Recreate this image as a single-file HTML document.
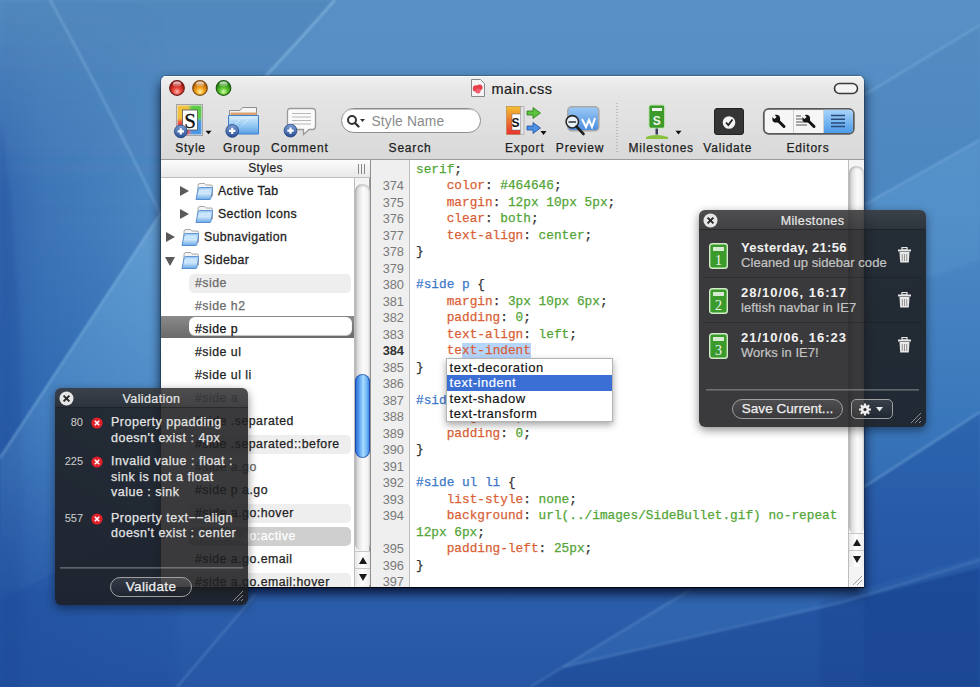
<!DOCTYPE html>
<html><head><meta charset="utf-8">
<style>
*{margin:0;padding:0;box-sizing:border-box}
html,body{width:980px;height:687px;overflow:hidden}
body{position:relative;font-family:"Liberation Sans",sans-serif;background:#3f73b1}
.a{position:absolute}
#bg{position:absolute;left:0;top:0}
/* window */
#win{position:absolute;z-index:1;left:161px;top:76px;width:703px;height:511px;border-radius:5px 5px 0 0;overflow:hidden;
 box-shadow:0 1px 0 rgba(0,0,10,.85),0 6px 12px rgba(0,5,25,.85),0 0 0 1px rgba(0,0,0,.2)}
#tb{position:absolute;left:0;top:0;width:703px;height:84px;background:linear-gradient(#f0f0f0,#e6e6e6 20%,#d9d9d9);border-bottom:1px solid #9c9c9c;box-shadow:inset 0 1px 0 #fff}
.lbl{position:absolute;width:100px;text-align:center;font-size:12px;letter-spacing:.8px;color:#1e1e1e;white-space:nowrap;top:64.5px;-webkit-text-stroke:.25px #1e1e1e}
#title{position:absolute;left:311px;width:100px;text-align:center;top:4.5px;font-size:14.5px;letter-spacing:.45px;color:#1a1a1a;-webkit-text-stroke:.2px #1a1a1a;white-space:nowrap}
.tl{position:absolute;top:5px;width:15px;height:15px;border-radius:50%}
#list{position:absolute;left:0;top:84px;width:209px;height:427px;background:#fff}
#hdr{position:absolute;left:0;top:0;width:209px;height:18px;background:linear-gradient(#fbfbfb,#e9e9e9);border-bottom:1px solid #bdbdbd;font-size:12px;letter-spacing:.3px;-webkit-text-stroke:.2px #222;color:#222;text-align:center;line-height:17px}

.row{position:absolute;left:0;width:193px;height:23px;font-size:12px;color:#222;white-space:nowrap;line-height:23px}
.row .ft{position:absolute;top:1px;-webkit-text-stroke:.3px #1e1e1e;font-size:12.3px;letter-spacing:.4px;color:#1e1e1e}
.row .st{position:absolute;left:34px;top:1px;-webkit-text-stroke:.25px currentColor;font-size:12.3px;letter-spacing:.5px}
.row.g .st{color:#6a6a6a}
.row.hl:before{content:"";position:absolute;left:28px;top:-5px;width:162px;height:19px;border-radius:5px;background:#eeeeee;top:2.5px}
.row .st{z-index:1}
.row.act:before{content:"";position:absolute;left:28px;top:2.5px;width:162px;height:19px;border-radius:5px;background:#cfcfcf}
.row.act .st{color:#fff}
.selband{position:absolute;left:0;width:193px;height:22px;background:linear-gradient(#8a8a8a,#6a6a6a);}
.selband:after{content:"";position:absolute;left:28px;top:1.5px;width:163px;height:19px;border-radius:6px;background:#fff;box-shadow:inset 0 -1px 1px rgba(0,0,0,.25)}
.row.selr .st{color:#111}
.tri{position:absolute;top:7px;width:0;height:0;border-left:9px solid #5a5a5a;border-top:5px solid transparent;border-bottom:5px solid transparent}
.trd{position:absolute;top:9px;width:0;height:0;border-top:9px solid #5a5a5a;border-left:5.5px solid transparent;border-right:5.5px solid transparent}
.fd{position:absolute;top:3px}
.grip{position:absolute;left:197px;top:4px;width:7px;height:10px;border-left:1px solid #888;border-right:1px solid #888}
.grip:after{content:"";position:absolute;left:2px;top:0;width:1px;height:10px;background:#888}

#gut{position:absolute;left:209px;top:84px;width:40px;height:427px;background:#efefef;border-left:1px solid #8f8f8f;border-right:1px solid #bdbdbd}
#code{position:absolute;left:249px;top:84px;width:438px;height:427px;background:#fff}
.ln{position:absolute;left:0;width:33px;line-height:16.5px;text-align:right;font-family:"Liberation Sans",sans-serif;font-size:12.8px;color:#7a7a7a}
.cl{position:absolute;left:6px;-webkit-text-stroke:.25px currentColor;line-height:16.5px;font-family:"Liberation Mono",monospace;font-size:12.78px;color:#333;white-space:pre}
.sel{background:#b6d5fb}.p{color:#d95f36}.v{color:#52a536}.s{color:#3d78c8}
#sb1{position:absolute;left:193px;top:18px;width:16px;height:409px;background:#f4f4f4;border-left:1px solid #bdbdbd;border-right:1px solid #9c9c9c}
#sb2{position:absolute;left:687px;top:84px;width:16px;height:427px;background:#f4f4f4;border-left:1px solid #bdbdbd}
.trk{position:absolute;left:0;width:15px;border-radius:7px;background:linear-gradient(90deg,#bcbcbc,#e4e4e4 25%,#fbfbfb 55%,#f2f2f2 85%,#dadada);box-shadow:inset 0 2px 2px rgba(0,0,0,.18)}
.thumb{position:absolute;left:0;width:15px;border-radius:7.5px;background:linear-gradient(90deg,#1f5fcf,#5ea4f2 30%,#a8dcfc 55%,#6ab4f6 80%,#2a6ed8);box-shadow:inset 0 0 0 1px rgba(20,50,140,.55)}
.arr{position:absolute;left:0;width:15px;height:17px;background:linear-gradient(90deg,#e8e8e8,#fff 50%,#ececec);border-top:1px solid #c8c8c8}
.au{position:absolute;left:3.5px;top:5px;border-bottom:7px solid #1a1a1a;border-left:4px solid transparent;border-right:4px solid transparent}
.ad{position:absolute;left:3.5px;top:5px;border-top:7px solid #1a1a1a;border-left:4px solid transparent;border-right:4px solid transparent}
.pop{position:absolute;left:446px;top:357.5px;width:166.5px;height:64px;background:#fff;border:1px solid #b4b4b4;box-shadow:0 3px 7px rgba(0,0,0,.35);z-index:2}
.pi{position:absolute;left:0;width:164.5px;-webkit-text-stroke:.15px currentColor;height:15.5px;font-size:13px;letter-spacing:.55px;line-height:15.5px;color:#111;padding-left:2.5px;white-space:nowrap}
.pi.on{background:#3b6fd6;color:#fff}
.hud{position:absolute;z-index:3;border-radius:6px;background:rgba(30,30,32,.875);box-shadow:0 3px 10px rgba(0,0,0,.45);overflow:hidden}
.hudt{position:absolute;left:0;top:0;width:100%;height:20px;padding-top:1px;background:linear-gradient(rgba(255,255,255,.10),rgba(255,255,255,.04));border-bottom:1px solid rgba(0,0,0,.45);color:#e8e8e8;font-size:12.5px;letter-spacing:.4px;-webkit-text-stroke:.2px #e8e8e8;text-align:center;line-height:20px}
.hx{position:absolute;left:6px;top:3px;width:14px;height:14px;border-radius:50%;background:#e8e8e8}
.ht{position:absolute;color:#e6e6e6;font-size:12px;white-space:nowrap}
.mt{position:absolute;color:#f2f2f2;font-size:13px;font-weight:bold;letter-spacing:.3px;white-space:nowrap;line-height:16px}
.md{position:absolute;-webkit-text-stroke:.2px #c4c4c4;color:#c4c4c4;font-size:13px;letter-spacing:.05px;white-space:nowrap;line-height:16px}
.vn{position:absolute;width:28px;text-align:right;color:#cfcfcf;font-size:11px;white-space:nowrap;line-height:15px}
.vt{position:absolute;-webkit-text-stroke:.25px #e4e4e4;color:#e4e4e4;font-size:12.5px;letter-spacing:.5px;white-space:nowrap;line-height:15px}
.hsep{position:absolute;height:2px;background:rgba(255,255,255,.28);border-bottom:1px solid rgba(0,0,0,.2)}
.hb{position:absolute;-webkit-text-stroke:.25px #eee;color:#eee;font-size:13.5px;letter-spacing:.35px;border:1.5px solid #a0a0a0;border-radius:10px;text-align:center;background:linear-gradient(rgba(255,255,255,.10),rgba(255,255,255,0))}
</style></head><body>
<svg id="bg" width="980" height="687" viewBox="0 0 980 687">
 <defs>
  <linearGradient id="g0" x1="0" y1="0" x2="0" y2="687" gradientUnits="userSpaceOnUse">
   <stop offset="0" stop-color="#5891c5"/><stop offset="0.3" stop-color="#4f8ac4"/><stop offset="0.6" stop-color="#3a78bc"/><stop offset="0.8" stop-color="#2d62ae"/><stop offset="1" stop-color="#2656a4"/>
  </linearGradient>
  <linearGradient id="gl" x1="0" y1="0" x2="170" y2="0" gradientUnits="userSpaceOnUse">
   <stop offset="0" stop-color="#1f4e9e" stop-opacity=".6"/><stop offset="0.25" stop-color="#1f4e9e" stop-opacity=".35"/><stop offset="1" stop-color="#1f4e9e" stop-opacity="0"/>
  </linearGradient>
  <linearGradient id="gtop" x1="0" y1="0" x2="0" y2="1">
   <stop offset="0" stop-color="#000" stop-opacity="0"/><stop offset=".3" stop-color="#000" stop-opacity="1"/><stop offset="1" stop-color="#000" stop-opacity="1"/>
  </linearGradient>
  <mask id="mtop"><rect width="980" height="687" fill="#fff"/><rect width="980" height="200" fill="url(#gmask)"/></mask>
  <linearGradient id="gmask" x1="0" y1="0" x2="0" y2="1"><stop offset="0" stop-color="#000"/><stop offset="1" stop-color="#fff"/></linearGradient>
  <filter id="b2" x="-20%" y="-20%" width="140%" height="140%"><feGaussianBlur stdDeviation="2"/></filter>
  <filter id="b1" x="-20%" y="-20%" width="140%" height="140%"><feGaussianBlur stdDeviation="1"/></filter>
 </defs>
 <rect width="980" height="687" fill="url(#g0)"/>
 <!-- top left slightly darker than top right -->
 <linearGradient id="tlg" x1="0" y1="0" x2="0" y2="220" gradientUnits="userSpaceOnUse"><stop offset="0" stop-color="#3a6aa0" stop-opacity=".22"/><stop offset="1" stop-color="#3a6aa0" stop-opacity="0"/></linearGradient>
 <path d="M0 0H335L265 77L161 215L0 220Z" fill="url(#tlg)" filter="url(#b2)"/>
 <!-- left dark band -->
 <g mask="url(#mtop)"><rect width="200" height="687" fill="url(#gl)"/></g>
 <path d="M0 120 Q30 300 20 687 L0 687Z" fill="#1a4896" opacity=".25" filter="url(#b2)"/>
 <!-- left wedge lighter -->
 <linearGradient id="wg" x1="161" y1="230" x2="20" y2="580" gradientUnits="userSpaceOnUse"><stop offset="0" stop-color="#7ab8e4" stop-opacity=".45"/><stop offset=".45" stop-color="#7ab8e4" stop-opacity=".32"/><stop offset="1" stop-color="#7ab8e4" stop-opacity=".05"/></linearGradient>
 <path d="M161 213 L38 400 L0 458 L0 600 L161 520Z" fill="url(#wg)" filter="url(#b1)"/>
 
 <!-- right side: lighter top ribbon -->
 <path d="M980 25 L864 96 L864 205 L980 140Z" fill="#3a70aa" opacity=".12" filter="url(#b2)"/>
 <path d="M980 140 L864 205 L864 300 L980 260Z" fill="#6aaee0" opacity=".18" filter="url(#b2)"/>
 <!-- right lower darker -->
 <path d="M980 412 L864 487 L864 687 L980 687Z" fill="#1c4c9c" opacity=".4" filter="url(#b1)"/>
 <path d="M980 568 L840 603 L563 667 L530 687 L980 687Z" fill="#163f8c" opacity=".3" filter="url(#b1)"/>
 <path d="M820 600 L820 687 L980 687 L980 560Z" fill="#123a86" opacity=".22" filter="url(#b2)"/>
 <!-- bottom middle lighter band -->
 <path d="M563 667 L690 588 L864 588 L980 556 L980 568 L840 603Z" fill="#5a9ad8" opacity=".14" filter="url(#b1)"/>
 <!-- bottom left darker -->
 <path d="M0 590 L180 590 L177 687 L0 687Z" fill="#1a4898" opacity=".18" filter="url(#b2)"/>
 <!-- streak lines -->
 <g stroke="#a8d4f6" fill="none" filter="url(#b1)">
  <path d="M50 0 Q100 90 161 215" stroke-opacity=".35" stroke-width="1.8"/>
  <path d="M161 213 L38 400 L0 458" stroke-opacity=".45" stroke-width="1.8"/>
  <path d="M335 0 Q300 40 265 77" stroke-opacity=".5" stroke-width="2"/>
  <path d="M980 25 L864 95" stroke-opacity=".3" stroke-width="1.8"/>
  <path d="M980 140 L864 205" stroke-opacity=".3" stroke-width="1.8"/>
  <path d="M980 412 L864 487" stroke-opacity=".4" stroke-width="1.8"/>
  <path d="M980 560 L840 603 L563 667" stroke-opacity=".22" stroke-width="1.8"/>
  <path d="M690 590 L530 687" stroke-opacity=".22" stroke-width="1.8"/>
  <path d="M255 595 L177 687" stroke-opacity=".25" stroke-width="1.8"/>
 </g>
</svg>

<div id="win">
 <div id="tb">
  <svg class="a" style="left:0;top:0" width="80" height="26" viewBox="0 0 80 26">
   <defs>
    <radialGradient id="tr" cx=".5" cy=".75" r=".6"><stop offset="0" stop-color="#ffb8b0"/><stop offset=".45" stop-color="#e8443a"/><stop offset="1" stop-color="#a8140e"/></radialGradient>
    <radialGradient id="ty" cx=".5" cy=".75" r=".6"><stop offset="0" stop-color="#fff4a8"/><stop offset=".45" stop-color="#f4a620"/><stop offset="1" stop-color="#b86008"/></radialGradient>
    <radialGradient id="tg" cx=".5" cy=".75" r=".6"><stop offset="0" stop-color="#d8ffa8"/><stop offset=".45" stop-color="#5cc432"/><stop offset="1" stop-color="#22800e"/></radialGradient>
    <linearGradient id="gloss" x1="0" y1="0" x2="0" y2="1"><stop offset="0" stop-color="#fff" stop-opacity=".85"/><stop offset="1" stop-color="#fff" stop-opacity="0"/></linearGradient>
   </defs>
   <g transform="translate(16,12)"><circle r="7.3" fill="url(#tr)" stroke="#6a1a16" stroke-width="1.2"/><ellipse cy="-3.6" rx="4.2" ry="2.8" fill="url(#gloss)"/></g>
   <g transform="translate(39,12)"><circle r="7.3" fill="url(#ty)" stroke="#7a4a10" stroke-width="1.2"/><ellipse cy="-3.6" rx="4.2" ry="2.8" fill="url(#gloss)"/></g>
   <g transform="translate(62.5,12)"><circle r="7.3" fill="url(#tg)" stroke="#1e5a14" stroke-width="1.2"/><ellipse cy="-3.6" rx="4.2" ry="2.8" fill="url(#gloss)"/></g>
  </svg>
  <div id="title">main.css</div>
  <svg class="a" style="left:0;top:0" width="703" height="84" viewBox="0 0 703 84">
   <defs>
    <linearGradient id="bb" x1="0" y1="0" x2="0" y2="1"><stop offset="0" stop-color="#7b9fd6"/><stop offset="1" stop-color="#2a4e94"/></linearGradient>
    <linearGradient id="fb" x1="0" y1="0" x2="0" y2="1"><stop offset="0" stop-color="#d4ecfc"/><stop offset="0.6" stop-color="#8cc4f2"/><stop offset="1" stop-color="#5a9ee6"/></linearGradient>
    <linearGradient id="pv" x1="0" y1="0" x2="0" y2="1"><stop offset="0" stop-color="#9ccaf6"/><stop offset="1" stop-color="#4a8ee0"/></linearGradient>
    <linearGradient id="sel" x1="0" y1="0" x2="0" y2="1"><stop offset="0" stop-color="#a8d4fa"/><stop offset="1" stop-color="#4a9ae8"/></linearGradient>
    <linearGradient id="exf" x1="0" y1="0" x2="0" y2="1"><stop offset="0" stop-color="#f4c030"/><stop offset="1" stop-color="#e83030"/></linearGradient>
    <filter id="sb" x="-10%" y="-10%" width="120%" height="120%"><feGaussianBlur stdDeviation="1.6"/></filter>
    <g id="badge"><circle r="6.4" fill="url(#bb)" stroke="#24447e" stroke-width=".8"/><path d="M-3.2 0H3.2M0 -3.2V3.2" stroke="#fff" stroke-width="2.2"/></g>
   </defs>
   <!-- doc icon -->
   <g transform="translate(310,3)">
    <path d="M0.5 .5H9.5L13.5 4.5V17.5H.5Z" fill="#f4f4f4" stroke="#8a8a8a"/>
    <circle cx="5" cy="9.5" r="3.2" fill="#e8404a"/><circle cx="8.5" cy="8.5" r="3" fill="#e8404a"/><circle cx="7" cy="12" r="2.5" fill="#f06070"/>
   </g>
   <!-- zoom pill -->
   <rect x="673.5" y="7.5" width="23" height="10" rx="5" fill="#f4f4f4" stroke="#3a3a3a" stroke-width="1.6"/>
   <!-- Style icon -->
   <g transform="translate(15,28)">
    <rect x="0.5" y="0.5" width="26" height="31" fill="#e6e6e6" stroke="#a4a4a4"/>
    <clipPath id="ring"><rect x="1.5" y="1.5" width="24" height="29"/></clipPath>
    <g clip-path="url(#ring)"><g filter="url(#sb)">
     <path d="M0 0H13.5V16H0Z" fill="#f2c23a"/><path d="M13.5 0H27V16H13.5Z" fill="#5ccc44"/>
     <path d="M13.5 16H27V32H13.5Z" fill="#4a96e6"/><path d="M0 16H13.5V32H0Z" fill="#e84a3e"/>
    </g></g>
    <rect x="6.5" y="6" width="15" height="20" fill="#fff" stroke="#555" stroke-width=".8"/>
    <text x="14" y="23.8" font-family="Liberation Serif" font-size="21" text-anchor="middle" fill="#111" stroke="#111" stroke-width=".3">S</text>
    <use href="#badge" x="4.8" y="27.4"/>
    <path d="M29.5 26.8H35.6L32.55 30.3Z" fill="#111"/>
   </g>
   <!-- Group icon -->
   <g transform="translate(67,31)">
    <path d="M1.5 3.5H12L14.5 .5H28.5V18H1.5Z" fill="#f6f6f6" stroke="#8e8e8e"/>
    <rect x="2.5" y="5.5" width="26" height="3" fill="#d9a070"/>
    <path d="M.5 8.5H30.5V27H.5Z" fill="url(#fb)" stroke="#3f7fcc"/>
    <path d="M3 12L26 11M6 18L12 13M14 18L20 13" stroke="#e8f6ff" stroke-width="1" opacity=".6"/>
    <use href="#badge" x="4.2" y="23.9"/>
   </g>
   <!-- Comment icon -->
   <g transform="translate(126,32)">
    <path d="M3.5 .5H25.5Q28.5 .5 28.5 3.5V18.5Q28.5 21.5 25.5 21.5H22L16.5 26.5V21.5H3.5Q.5 21.5 .5 18.5V3.5Q.5 .5 3.5 .5Z" fill="#fbfbfb" stroke="#9a9a9a" stroke-width="1.3"/>
    <path d="M5 5.5H24M5 9H24M5 12.5H24M5 16H24" stroke="#b8b8b8" stroke-width="1"/>
    <use href="#badge" x="3.5" y="22.6"/>
   </g>
   <!-- Search field -->
   <rect x="180.5" y="32.5" width="139" height="24" rx="12" fill="#fff" stroke="#8c8c8c"/>
   <path d="M181.5 42Q181.5 33.5 192 33.5H308Q318.5 33.5 318.5 42" fill="none" stroke="#c4c4c4" stroke-width="1"/>
   <circle cx="191" cy="44" r="4" fill="none" stroke="#333" stroke-width="2"/>
   <path d="M194 47L197.5 50.5" stroke="#333" stroke-width="2.4" stroke-linecap="round"/>
   <path d="M199 43H204L201.5 46Z" fill="#333"/>
   <text x="210.5" y="49.5" font-family="Liberation Sans" font-size="13.8" letter-spacing=".15" fill="#8a8a8a">Style Name</text>
   <!-- Export icon -->
   <g transform="translate(345,30)">
    <rect x=".5" y=".5" width="14" height="28" fill="url(#exf)" stroke="#b08040" stroke-width=".6"/>
    <rect x="6" y="8" width="9" height="16" fill="#fff" stroke="#666" stroke-width=".5"/>
    <text x="9.5" y="21" font-family="Liberation Sans" font-weight="bold" font-size="12" text-anchor="middle" fill="#111">S</text>
    <rect x="14.5" y=".5" width="3.5" height="28" fill="#e4e4e4" stroke="#9a9a9a" stroke-width=".6"/>
    <path d="M21 5H27V1.5L34.5 7L27 12.5V9H21Z" fill="#5cc43c" stroke="#2e7a1a" stroke-width=".8"/>
    <path d="M21 20H27V16.5L34.5 22L27 27.5V24H21Z" fill="#4a90e6" stroke="#1f4ea0" stroke-width=".8"/>
    <path d="M34.5 25H40.5L37.5 29Z" fill="#111"/>
   </g>
   <!-- Preview icon -->
   <g transform="translate(406,30)">
    <rect x=".8" y=".8" width="31" height="24" rx="4" fill="url(#pv)" stroke="#a8a8a8" stroke-width="1.6"/>
    <path d="M15 13L19 21L22 14L25 21L28 12" fill="none" stroke="#fff" stroke-width="2"/>
    <circle cx="5.3" cy="15.8" r="6.2" fill="#e8f2fb" stroke="#2a2a2a" stroke-width="1.6"/>
    <path d="M1.5 16H9" stroke="#333" stroke-width="1.4"/>
    <path d="M9.5 20.5L16.5 28" stroke="#222" stroke-width="2.6" stroke-linecap="round"/>
   </g>
   <!-- separator -->
   <path d="M456 27V77" stroke="#9a9a9a" stroke-width="1" stroke-dasharray="1 2"/>
   <!-- Milestones icon -->
   <g transform="translate(487,28)">
    <rect x=".8" y=".8" width="16" height="23.5" rx="2" fill="#3c9a2a" stroke="#cfe8c4" stroke-width="1.2"/>
    <rect x="4" y="4" width="10" height="3" fill="#f2f2f2"/>
    <text x="8.8" y="21" font-family="Liberation Sans" font-weight="bold" font-size="12" text-anchor="middle" fill="#f4f4f4">S</text>
    <rect x="7.5" y="24.5" width="2.5" height="6" fill="#3a3a5a"/>
    <path d="M-2 33Q8 29 20 33L20 35H-2Z" fill="#86c23c"/>
    <path d="M27.5 26.8H33.5L30.5 30.5Z" fill="#111"/>
   </g>
   <!-- Validate icon -->
   <rect x="553.5" y="32.5" width="29" height="26" rx="2.5" fill="#353535" stroke="#222"/>
   <circle cx="568" cy="46.5" r="6.3" fill="#f4f4f4"/>
   <path d="M565 46.5L567.3 49L571.5 43.5" fill="none" stroke="#222" stroke-width="1.8"/>
   <!-- Editors segmented -->
   <rect x="602.8" y="32.8" width="90" height="25" rx="5" fill="#f6f6f6" stroke="#5a5a5a" stroke-width="1.8"/>
   <path d="M662.5 33.7H688Q691.9 33.7 691.9 37.7V53Q691.9 57 688 57H662.5Z" fill="url(#sel)"/>
   <path d="M632.5 34V57M662.5 34V57" stroke="#cfcfcf" stroke-width="1"/>
   <g id="wr1" transform="translate(611,38.5)">
    <path d="M5.2 5.2L12 12" stroke="#141414" stroke-width="3" stroke-linecap="round"/>
    <circle cx="4.2" cy="4.2" r="3.9" fill="#141414"/>
    <path d="M0 2.2L2.2 0L4.6 2.4L2.4 4.6Z" fill="#f6f6f6"/>
   </g>
   <g transform="translate(641,38.5)">
    <path d="M5.2 5.2L12 12" stroke="#141414" stroke-width="3" stroke-linecap="round"/>
    <circle cx="4.2" cy="4.2" r="3.9" fill="#141414"/>
    <path d="M0 2.2L2.2 0L4.6 2.4L2.4 4.6Z" fill="#f4f4f4"/>
   </g>
   <path d="M635 40H640M635 43H641M635 46H643M635 49H646" stroke="#555" stroke-width="1"/>
   <path d="M670 39.5H684M670 43.2H684M670 46.9H684M670 50.6H684" stroke="#2a4a78" stroke-width="1.5"/>
  </svg>
  <div class="lbl" style="left:-20.5px">Style</div>
  <div class="lbl" style="left:30.75px">Group</div>
  <div class="lbl" style="left:88.85px">Comment</div>
  <div class="lbl" style="left:199px">Search</div>
  <div class="lbl" style="left:313.8px">Export</div>
  <div class="lbl" style="left:369px">Preview</div>
  <div class="lbl" style="left:450.25px">Milestones</div>
  <div class="lbl" style="left:516.75px">Validate</div>
  <div class="lbl" style="left:597px">Editors</div>
 </div>
 <div id="list">
  <div id="hdr">Styles<span class="grip"></span></div>
<svg width="0" height="0" style="position:absolute"><defs><linearGradient id="fg" x1="0" y1="0" x2="0" y2="1"><stop offset="0" stop-color="#a8d2f8"/><stop offset=".5" stop-color="#cfe8fc"/><stop offset="1" stop-color="#6aa8e8"/></linearGradient></defs></svg>
<div class="row " style="top:19.3px"><i class="tri" style="left:19px"></i><svg class="fd" style="left:34px" width="18" height="18" viewBox="0 0 18 18"><path d="M3 3.5Q3 1.5 5 1.5H9Q10 1.5 10.5 2.5L11 3H16Q17.5 3 17.5 4.5V14H3Z" fill="#f4f4f4" stroke="#9c9c9c" stroke-width=".9"/><path d="M1 17.5L3.2 6.5Q3.4 5.6 4.4 5.6H17.2Q18 5.6 17.8 6.5L15.8 16.6Q15.6 17.5 14.8 17.5Z" fill="url(#fg)" stroke="#4a86cc" stroke-width=".9"/><path d="M4 9L15 8.5" stroke="#e6f4ff" stroke-width="1.2" opacity=".7"/></svg><span class="ft" style="left:57px">Active Tab</span></div>
<div class="row " style="top:42.3px"><i class="tri" style="left:19px"></i><svg class="fd" style="left:34px" width="18" height="18" viewBox="0 0 18 18"><path d="M3 3.5Q3 1.5 5 1.5H9Q10 1.5 10.5 2.5L11 3H16Q17.5 3 17.5 4.5V14H3Z" fill="#f4f4f4" stroke="#9c9c9c" stroke-width=".9"/><path d="M1 17.5L3.2 6.5Q3.4 5.6 4.4 5.6H17.2Q18 5.6 17.8 6.5L15.8 16.6Q15.6 17.5 14.8 17.5Z" fill="url(#fg)" stroke="#4a86cc" stroke-width=".9"/><path d="M4 9L15 8.5" stroke="#e6f4ff" stroke-width="1.2" opacity=".7"/></svg><span class="ft" style="left:57px">Section Icons</span></div>
<div class="row " style="top:65.3px"><i class="tri" style="left:5px"></i><svg class="fd" style="left:20px" width="18" height="18" viewBox="0 0 18 18"><path d="M3 3.5Q3 1.5 5 1.5H9Q10 1.5 10.5 2.5L11 3H16Q17.5 3 17.5 4.5V14H3Z" fill="#f4f4f4" stroke="#9c9c9c" stroke-width=".9"/><path d="M1 17.5L3.2 6.5Q3.4 5.6 4.4 5.6H17.2Q18 5.6 17.8 6.5L15.8 16.6Q15.6 17.5 14.8 17.5Z" fill="url(#fg)" stroke="#4a86cc" stroke-width=".9"/><path d="M4 9L15 8.5" stroke="#e6f4ff" stroke-width="1.2" opacity=".7"/></svg><span class="ft" style="left:43px">Subnavigation</span></div>
<div class="row " style="top:88.3px"><i class="trd" style="left:4px"></i><svg class="fd" style="left:20px" width="18" height="18" viewBox="0 0 18 18"><path d="M3 3.5Q3 1.5 5 1.5H9Q10 1.5 10.5 2.5L11 3H16Q17.5 3 17.5 4.5V14H3Z" fill="#f4f4f4" stroke="#9c9c9c" stroke-width=".9"/><path d="M1 17.5L3.2 6.5Q3.4 5.6 4.4 5.6H17.2Q18 5.6 17.8 6.5L15.8 16.6Q15.6 17.5 14.8 17.5Z" fill="url(#fg)" stroke="#4a86cc" stroke-width=".9"/><path d="M4 9L15 8.5" stroke="#e6f4ff" stroke-width="1.2" opacity=".7"/></svg><span class="ft" style="left:43px">Sidebar</span></div>
<div class="row g hl" style="top:111.3px"><span class="st">#side</span></div>
<div class="row g" style="top:134.3px"><span class="st">#side h2</span></div>
<div class="selband" style="top:155.8px"></div>
<div class="row selr" style="top:157.3px"><span class="st">#side p</span></div>
<div class="row " style="top:180.3px"><span class="st">#side ul</span></div>
<div class="row " style="top:203.3px"><span class="st">#side ul li</span></div>
<div class="row g" style="top:226.3px"><span class="st">#side a</span></div>
<div class="row " style="top:249.3px"><span class="st">#side .separated</span></div>
<div class="row hl" style="top:272.3px"><span class="st">#side .separated::before</span></div>
<div class="row g" style="top:295.3px"><span class="st">#side a.go</span></div>
<div class="row " style="top:318.3px"><span class="st">#side p a.go</span></div>
<div class="row hl" style="top:341.3px"><span class="st">#side a.go:hover</span></div>
<div class="row act" style="top:364.3px"><span class="st">#side a.go:active</span></div>
<div class="row " style="top:387.3px"><span class="st">#side a.go.email</span></div>
<div class="row hl" style="top:410.3px"><span class="st">#side a.go.email:hover</span></div>
<div id="sb1"><div class="trk" style="top:6px;height:367px"></div><div class="thumb" style="top:196px;height:84px"></div>
<div class="arr" style="top:373px"><i class="au"></i></div><div class="arr" style="top:390px"><i class="ad"></i></div></div>
 </div>
 <div id="gut"><pre class="ln" style="top:1.5px">

374
375
376
377
378
379
380
381
382
383
<b style="color:#333">384</b>
385
386
387
388
389
390
391
392
393
394

395
396
397</pre></div>
 <div id="code"><pre class="cl" style="top:1.5px"><span class="v">serif</span>;
    <span class="p">color</span>: <span class="v">#464646</span>;
    <span class="p">margin</span>: <span class="v">12px 10px 5px</span>;
    <span class="p">clear</span>: <span class="v">both</span>;
    <span class="p">text-align</span>: <span class="v">center</span>;
}

<span class="s">#side p</span> {
    <span class="p">margin</span>: <span class="v">3px 10px 6px</span>;
    <span class="p">padding</span>: <span class="v">0</span>;
    <span class="p">text-align</span>: <span class="v">left</span>;
    <span class="p">te<span class="sel">xt-indent</span></span>
}

<span class="s">#side ul</span> {
    <span class="p">margin</span>: <span class="v">0</span>;
    <span class="p">padding</span>: <span class="v">0</span>;
}

<span class="s">#side ul li</span> {
    <span class="p">list-style</span>: <span class="v">none</span>;
    <span class="p">background</span>: <span class="v">url(../images/SideBullet.gif) no-repeat</span>
<span class="v">12px 6px</span>;
    <span class="p">padding-left</span>: <span class="v">25px</span>;
}
</pre></div>
 <div id="sb2"><div class="trk" style="top:6px;height:368px"></div>
<div class="arr" style="top:373px"><i class="au"></i></div><div class="arr" style="top:390px"><i class="ad"></i></div>
<svg class="a" style="left:2px;top:414px" width="12" height="12" viewBox="0 0 12 12"><path d="M2 11L11 2M6 11L11 6" stroke="#9a9a9a" stroke-width="1"/></svg></div>
</div>

<div class="pop"><div class="pi" style="top:1px">text-decoration</div><div class="pi on" style="top:16.5px">text-indent</div><div class="pi" style="top:32px">text-shadow</div><div class="pi" style="top:47.5px">text-transform</div></div>
<!-- Milestones HUD -->
<div class="hud" style="left:699px;top:210px;width:227px;height:217px">
 <div class="hudt">Milestones</div><svg class="a" style="left:4px;top:3px" width="15" height="15" viewBox="0 0 15 15"><circle cx="7.5" cy="7.5" r="7" fill="#e6e6e6"/><path d="M4.6 4.6L10.4 10.4M10.4 4.6L4.6 10.4" stroke="#2a2a2a" stroke-width="2"/></svg>
 <svg class="a" style="left:10px;top:33px" width="19" height="26" viewBox="0 0 19 26"><rect x=".7" y=".7" width="17.6" height="24.6" rx="2.5" fill="#3a9a2c" stroke="#d2ecc8" stroke-width="1.4"/><rect x="4" y="4" width="11" height="4" fill="#eaf4e4" opacity=".9"/><text x="9.5" y="22" font-family="Liberation Serif" font-size="14" text-anchor="middle" fill="#f4f4f4">1</text></svg>
 <div class="mt" style="left:42px;top:30px">Yesterday, 21:56</div>
 <div class="md" style="left:42px;top:45px">Cleaned up sidebar code</div>
 <svg class="a" style="left:198px;top:37px" width="15" height="16" viewBox="0 0 15 16"><path d="M1 3.5H14" stroke="#e8e8e8" stroke-width="2"/><rect x="5" y=".5" width="5" height="2.5" fill="none" stroke="#e8e8e8" stroke-width="1.2"/><path d="M2.5 5H12.5L11.8 15.5H3.2Z" fill="#e8e8e8"/><path d="M5.3 7V14M7.5 7V14M9.7 7V14" stroke="#8a8a8a" stroke-width=".9"/></svg>
 <svg class="a" style="left:10px;top:78px" width="19" height="26" viewBox="0 0 19 26"><rect x=".7" y=".7" width="17.6" height="24.6" rx="2.5" fill="#3a9a2c" stroke="#d2ecc8" stroke-width="1.4"/><rect x="4" y="4" width="11" height="4" fill="#eaf4e4" opacity=".9"/><text x="9.5" y="22" font-family="Liberation Serif" font-size="14" text-anchor="middle" fill="#f4f4f4">2</text></svg>
 <div class="mt" style="left:42px;top:75px;letter-spacing:1px">28/10/06, 16:17</div>
 <div class="md" style="left:42px;top:90px">leftish navbar in IE7</div>
 <svg class="a" style="left:198px;top:82px" width="15" height="16" viewBox="0 0 15 16"><path d="M1 3.5H14" stroke="#e8e8e8" stroke-width="2"/><rect x="5" y=".5" width="5" height="2.5" fill="none" stroke="#e8e8e8" stroke-width="1.2"/><path d="M2.5 5H12.5L11.8 15.5H3.2Z" fill="#e8e8e8"/><path d="M5.3 7V14M7.5 7V14M9.7 7V14" stroke="#8a8a8a" stroke-width=".9"/></svg>
 <svg class="a" style="left:10px;top:123px" width="19" height="26" viewBox="0 0 19 26"><rect x=".7" y=".7" width="17.6" height="24.6" rx="2.5" fill="#3a9a2c" stroke="#d2ecc8" stroke-width="1.4"/><rect x="4" y="4" width="11" height="4" fill="#eaf4e4" opacity=".9"/><text x="9.5" y="22" font-family="Liberation Serif" font-size="14" text-anchor="middle" fill="#f4f4f4">3</text></svg>
 <div class="mt" style="left:42px;top:120px;letter-spacing:1px">21/10/06, 16:23</div>
 <div class="md" style="left:42px;top:135px">Works in IE7!</div>
 <svg class="a" style="left:198px;top:127px" width="15" height="16" viewBox="0 0 15 16"><path d="M1 3.5H14" stroke="#e8e8e8" stroke-width="2"/><rect x="5" y=".5" width="5" height="2.5" fill="none" stroke="#e8e8e8" stroke-width="1.2"/><path d="M2.5 5H12.5L11.8 15.5H3.2Z" fill="#e8e8e8"/><path d="M5.3 7V14M7.5 7V14M9.7 7V14" stroke="#8a8a8a" stroke-width=".9"/></svg>
 <div class="a" style="left:4px;top:67px;width:219px;height:1px;background:rgba(0,0,0,.18)"></div>
 <div class="a" style="left:4px;top:112px;width:219px;height:1px;background:rgba(0,0,0,.18)"></div>
 <div class="hsep" style="left:7px;top:178.5px;width:213px"></div>
 <div class="hb" style="left:33px;top:188.5px;width:111px;height:20px;line-height:18.5px;letter-spacing:.05px">Save Current...</div>
 <div class="hb" style="left:152px;top:188.5px;width:42px;height:20px;border-radius:5px"><svg class="a" style="left:6px;top:3px" width="30" height="13" viewBox="0 0 30 13"><g transform="translate(7,6.5)"><circle r="4.2" fill="#eee"/><path d="M0 -6V6M-6 0H6M-4.2 -4.2L4.2 4.2M4.2 -4.2L-4.2 4.2" stroke="#eee" stroke-width="2.2"/><circle r="1.6" fill="#2a2a2a"/></g><path d="M18 4H25L21.5 8.5Z" fill="#eee"/></svg></div>
 <svg class="a" style="left:211px;top:202px" width="12" height="12" viewBox="0 0 12 12"><path d="M1 11L11 1M5 11L11 5M9 11L11 9" stroke="#8a8a8a" stroke-width="1"/></svg>
</div>

<!-- Validation HUD -->
<div class="hud" style="left:55px;top:388px;width:193px;height:217px">
 <div class="hudt">Validation</div><svg class="a" style="left:4px;top:3px" width="15" height="15" viewBox="0 0 15 15"><circle cx="7.5" cy="7.5" r="7" fill="#e6e6e6"/><path d="M4.6 4.6L10.4 10.4M10.4 4.6L4.6 10.4" stroke="#2a2a2a" stroke-width="2"/></svg>
 <div class="vn" style="left:0;top:27px">80</div>
 <svg class="a" style="left:36px;top:29px" width="12" height="12" viewBox="0 0 12 12"><circle cx="6" cy="6" r="5.6" fill="#e0202a"/><path d="M3.8 3.8L8.2 8.2M8.2 3.8L3.8 8.2" stroke="#fff" stroke-width="1.6"/></svg>
 <div class="vt" style="left:56px;top:27.0px">Property ppadding</div>
 <div class="vt" style="left:56px;top:42.7px">doesn't exist : 4px</div>
 <div class="vn" style="left:0;top:66px">225</div>
 <svg class="a" style="left:36px;top:68px" width="12" height="12" viewBox="0 0 12 12"><circle cx="6" cy="6" r="5.6" fill="#e0202a"/><path d="M3.8 3.8L8.2 8.2M8.2 3.8L3.8 8.2" stroke="#fff" stroke-width="1.6"/></svg>
 <div class="vt" style="left:56px;top:66.0px">Invalid value : float :</div>
 <div class="vt" style="left:56px;top:81.7px">sink is not a float</div>
 <div class="vt" style="left:56px;top:97.4px">value : sink</div>
 <div class="vn" style="left:0;top:122.5px">557</div>
 <svg class="a" style="left:36px;top:124.5px" width="12" height="12" viewBox="0 0 12 12"><circle cx="6" cy="6" r="5.6" fill="#e0202a"/><path d="M3.8 3.8L8.2 8.2M8.2 3.8L3.8 8.2" stroke="#fff" stroke-width="1.6"/></svg>
 <div class="vt" style="left:56px;top:122.5px">Property text−−align</div>
 <div class="vt" style="left:56px;top:138.2px">doesn't exist : center</div>
 <div class="hsep" style="left:5px;top:179px;width:183px"></div>
 <div class="hb" style="left:55px;top:189px;width:82px;height:20px;line-height:18.5px">Validate</div>
 <svg class="a" style="left:177px;top:202px" width="12" height="12" viewBox="0 0 12 12"><path d="M1 11L11 1M5 11L11 5M9 11L11 9" stroke="#8a8a8a" stroke-width="1"/></svg>
</div>
</body></html>
